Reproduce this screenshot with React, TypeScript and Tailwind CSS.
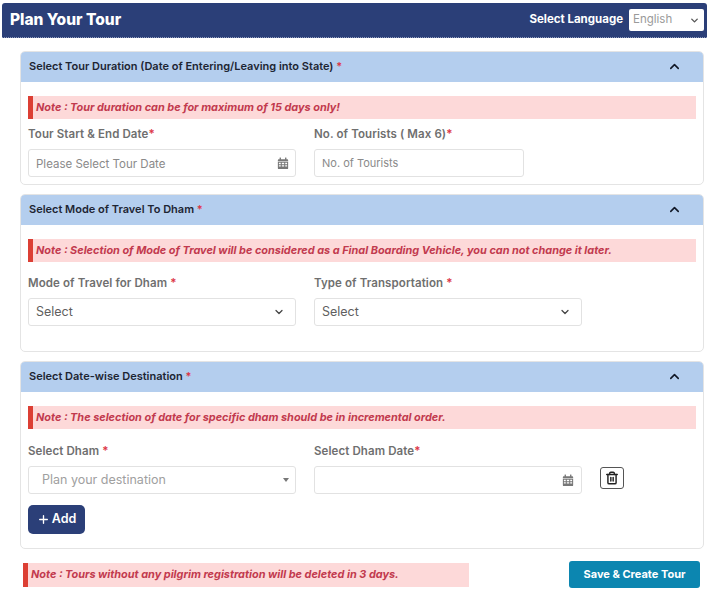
import { ChevronUp, ChevronDown, Plus, Trash2 } from 'lucide-react';

const CalendarIcon = () => (
    <svg viewBox="0 0 14 14" className="w-[12px] h-[12px] text-[#777]" fill="currentColor">
        <rect x="3" y="0.5" width="1.6" height="3" rx="0.5" />
        <rect x="9.4" y="0.5" width="1.6" height="3" rx="0.5" />
        <path d="M1 3.5a1 1 0 0 1 1-1h10a1 1 0 0 1 1 1V5H1z" />
        <path fillRule="evenodd" d="M1 5.6h12V13a1 1 0 0 1-1 1H2a1 1 0 0 1-1-1zM2.2 6.8v1.6h2.2V6.8zm3.4 0v1.6h2.8V6.8zm4 0v1.6h2.2V6.8zM2.2 9.5v1.6h2.2V9.5zm3.4 0v1.6h2.8V9.5zm4 0v1.6h2.2V9.5z" />
    </svg>
);

const Note = ({ text, className = '' }: { text: string; className?: string }) => (
    <div className={`flex items-center bg-[#fdd9d9] border-l-[5px] border-[#dc3f34] pl-[3px] text-[10.9px] font-bold italic text-[#c23a4e] ${className}`}>
        {text}
    </div>
);

const Label = ({ children }: { children: React.ReactNode }) => (
    <div className="text-[11.5px] font-semibold text-[#6f6f6f] leading-[14px] tracking-[0.1px]">{children}</div>
);

const Req = () => <span className="text-[#dc3545]">*</span>;

const Section = ({ title, note, children }: { title: string; note: string; children: React.ReactNode }) => (
    <div className="ml-[20px] mr-[3px] bg-white border border-[#e4e4e4] rounded-[5px] overflow-hidden">
        <div className="h-[31px] -mt-px -mx-px flex items-center justify-between bg-[#b4ceee] pl-[9px] pr-[22px]">
            <span className="text-[11px] font-semibold text-[#1d2533]">
                {title} <Req />
            </span>
            <ChevronUp className="w-[15px] h-[15px] text-[#111827]" strokeWidth={2.5} />
        </div>
        <div className="px-[7px] pt-[14px]">
            <Note text={note} className="h-[23px]" />
            {children}
        </div>
    </div>
);

export default function App() {
    return (
        <div className="w-[707px] h-[599px] bg-white overflow-hidden pt-[3px] font-['Inter',sans-serif]">
            {/* Header */}
            <div className="ml-[2px] h-[35px] bg-[#2b3f78] rounded-t-[3px] flex items-center justify-between pl-[8px] pr-[3px] border-b border-dotted border-[#8f9bbd]">
                <h1 className="text-[15.5px] font-extrabold text-white">Plan Your Tour</h1>
                <div className="flex items-center gap-[6px]">
                    <span className="text-[11.5px] font-bold text-white">Select Language</span>
                    <div className="w-[75px] h-[22px] bg-white rounded-[2px] flex items-center justify-between pl-[4px] pr-[4px]">
                        <span className="text-[11.5px] text-[#9a9a9a]">English</span>
                        <ChevronDown className="w-[11px] h-[11px] text-[#555]" strokeWidth={3} />
                    </div>
                </div>
            </div>

            <div className="pt-[13px] flex flex-col gap-[9px]">
                {/* Tour duration */}
                <Section title="Select Tour Duration (Date of Entering/Leaving into State)" note="Note : Tour duration can be for maximum of 15 days only!">
                    <div className="flex gap-[18px] pt-[8px] pb-[7px]">
                        <div className="w-[268px]">
                            <Label>Tour Start &amp; End Date<Req /></Label>
                            <div className="mt-[8px] h-[28px] border border-[#e2e2e2] rounded-[3px] flex items-center justify-between pl-[7px] pr-[6px]">
                                <span className="text-[11.5px] leading-[17px] pt-[2px] text-[#8a8a8a]">Please Select Tour Date</span>
                                <CalendarIcon />
                            </div>
                        </div>
                        <div className="w-[210px]">
                            <Label>No. of Tourists ( Max 6)<Req /></Label>
                            <div className="mt-[8px] h-[28px] border border-[#e2e2e2] rounded-[3px] flex items-center pl-[7px]">
                                <span className="text-[11px] text-[#8a8a8a]">No. of Tourists</span>
                            </div>
                        </div>
                    </div>
                </Section>

                {/* Mode of travel */}
                <Section title="Select Mode of Travel To Dham" note="Note : Selection of Mode of Travel will be considered as a Final Boarding Vehicle, you can not change it later.">
                    <div className="flex gap-[18px] pt-[14px] pb-[25px]">
                        <div className="w-[268px]">
                            <Label>Mode of Travel for Dham <Req /></Label>
                            <div className="mt-[8px] h-[28px] border border-[#e2e2e2] rounded-[3px] flex items-center justify-between pl-[7px] pr-[10px]">
                                <span className="text-[12.5px] text-[#5f5f5f]">Select</span>
                                <ChevronDown className="w-[12px] h-[12px] text-[#444]" strokeWidth={2.5} />
                            </div>
                        </div>
                        <div className="w-[268px]">
                            <Label>Type of Transportation <Req /></Label>
                            <div className="mt-[8px] h-[28px] border border-[#e2e2e2] rounded-[3px] flex items-center justify-between pl-[7px] pr-[10px]">
                                <span className="text-[12.5px] text-[#5f5f5f]">Select</span>
                                <ChevronDown className="w-[12px] h-[12px] text-[#444]" strokeWidth={2.5} />
                            </div>
                        </div>
                    </div>
                </Section>

                {/* Destination */}
                <Section title="Select Date-wise Destination" note="Note : The selection of date for specific dham should be in incremental order.">
                    <div className="flex gap-[18px] pt-[15px]">
                        <div className="w-[268px]">
                            <Label>Select Dham <Req /></Label>
                            <div className="mt-[8px] h-[28px] border border-[#e2e2e2] rounded-[3px] flex items-center justify-between pl-[13px] pr-[6px]">
                                <span className="text-[12.5px] text-[#a0a0a0]">Plan your destination</span>
                                <span className="w-0 h-0 border-x-[3px] border-x-transparent border-t-[4px] border-t-[#777]" />
                            </div>
                        </div>
                        <div className="w-[268px]">
                            <Label>Select Dham Date<Req /></Label>
                            <div className="mt-[8px] h-[28px] border border-[#e2e2e2] rounded-[3px] flex items-center justify-end pr-[7px]">
                                <CalendarIcon />
                            </div>
                        </div>
                        <div className="pt-[23px]">
                            <button className="w-[24px] h-[22px] border-[1.5px] border-[#555] rounded-[3px] flex items-center justify-center">
                                <Trash2 className="w-[14px] h-[14px] text-[#222]" strokeWidth={2.5} />
                            </button>
                        </div>
                    </div>
                    <button className="mt-[11px] mb-[14px] w-[57px] h-[29px] bg-[#2b3f78] rounded-[5px] flex items-center justify-center gap-[2px] text-[12.5px] font-semibold text-white">
                        <Plus className="w-[13px] h-[13px]" strokeWidth={2.5} />
                        Add
                    </button>
                </Section>
            </div>

            {/* Footer */}
            <div className="flex items-center justify-between pl-[23px] pr-[7px] pt-[12px]">
                <Note text="Note : Tours without any pilgrim registration will be deleted in 3 days." className="w-[446px] h-[24px]" />
                <button className="w-[131px] h-[27px] bg-[#0c86b0] rounded-[3px] text-[11px] font-bold text-white">Save &amp; Create Tour</button>
            </div>
        </div>
    );
}
